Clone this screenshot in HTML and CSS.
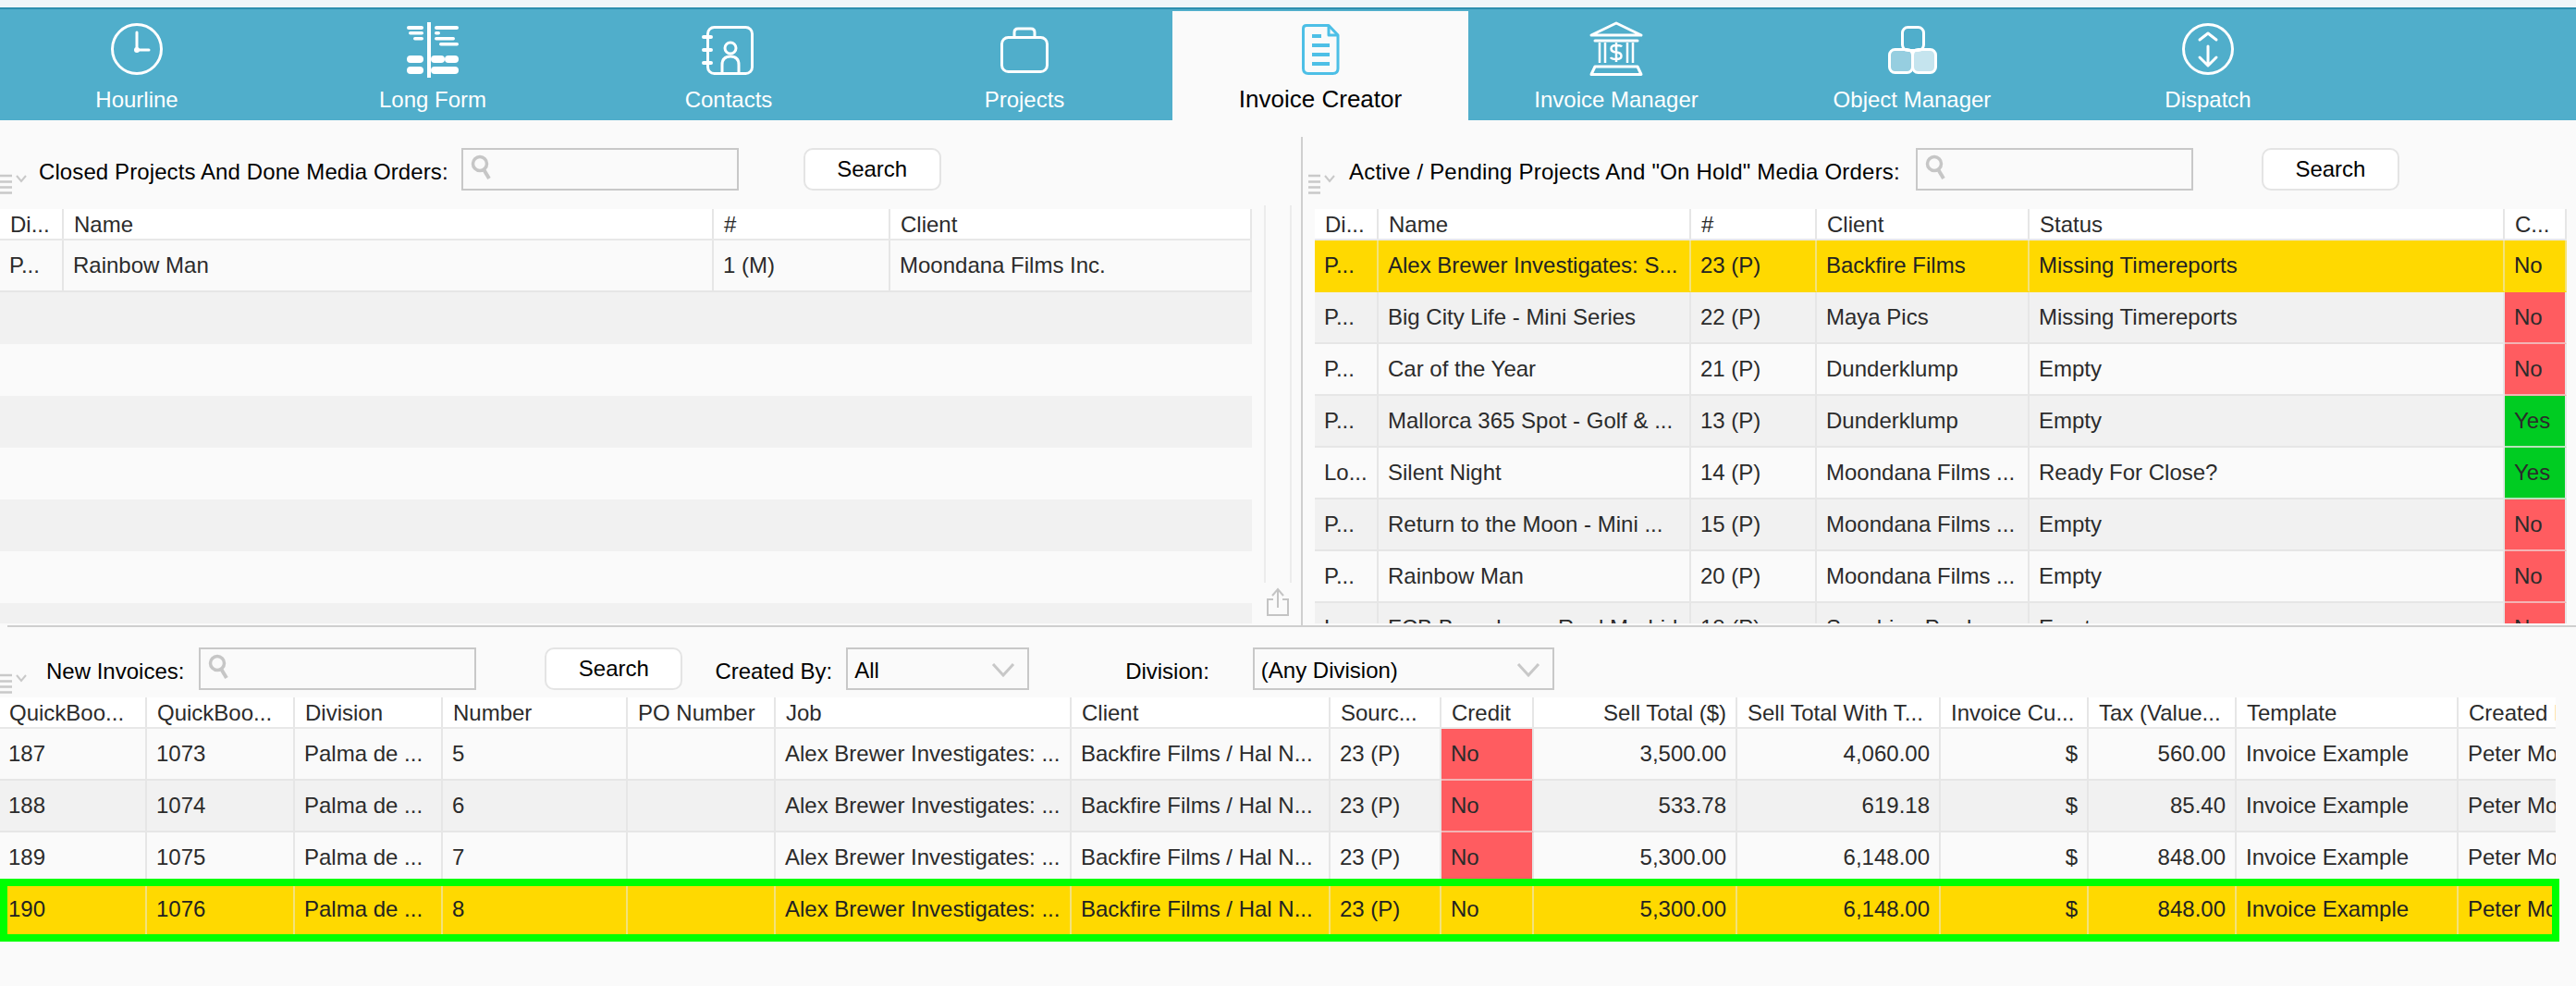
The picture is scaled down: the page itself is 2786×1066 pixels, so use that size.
FILE: index.html
```html
<!DOCTYPE html>
<html lang="en">
<head>
<meta charset="utf-8">
<title>Invoice Creator</title>
<link rel="stylesheet" href="styles.css">
</head>
<body>
<div class="app">
  <div class="top-strip"></div>
  <nav class="tabs">
    <a class="tab">
      <svg class="tab-icon" viewBox="0 0 64 64"><circle cx="32" cy="31" r="26.5" class="s3"/><path d="M32 13V32H45" class="s3"/><circle cx="32" cy="32" r="3" class="fw"/></svg>
      <span>Hourline</span>
    </a>
    <a class="tab">
      <svg class="tab-icon" viewBox="0 0 64 64"><g class="fw"><rect x="26" y="2" width="4" height="60"/><rect x="4" y="6" width="18" height="4" rx="2"/><rect x="34" y="6" width="26" height="4" rx="2"/><rect x="6" y="12" width="16" height="3.500" rx="1.700"/><rect x="34" y="12" width="6" height="3.500" rx="1.700"/><rect x="11" y="18" width="11" height="3.500" rx="1.700"/><rect x="34" y="18" width="22" height="3.500" rx="1.700"/><rect x="39" y="24" width="21" height="3.500" rx="1.700"/><rect x="4" y="38" width="18" height="8" rx="4"/><rect x="30" y="38" width="15" height="8" rx="4"/><rect x="45" y="38" width="15" height="8" rx="4"/><rect x="4" y="50" width="18" height="8" rx="4"/><rect x="30" y="50" width="30" height="8" rx="4"/></g></svg>
      <span>Long Form</span>
    </a>
    <a class="tab">
      <svg class="tab-icon" viewBox="0 0 64 64"><rect x="9.500" y="7.500" width="48" height="50" rx="7" class="s3"/><path d="M5 18H13M5 32H13M5 46H13" class="s4"/><circle cx="34" cy="30" r="6" class="s3"/><path d="M25 57V48Q25 39 34 39Q43 39 43 48V57" class="s3"/></svg>
      <span>Contacts</span>
    </a>
    <a class="tab">
      <svg class="tab-icon" viewBox="0 0 64 64"><rect x="7.500" y="18.500" width="49" height="37" rx="7" class="s3"/><path d="M21 18V13Q21 9 25 9H39Q43 9 43 13V18" class="s3"/></svg>
      <span>Projects</span>
    </a>
    <a class="tab active">
      <svg class="tab-icon" viewBox="0 0 64 64"><path d="M17 5.500H41L51 16V52Q51 57.500 45.500 57.500H19Q13.500 57.500 13.500 52V9Q13.500 5.500 17 5.500Z" class="sb"/><path d="M41 6V16H51" class="sb"/><path d="M23 17H33M23 27H42M23 37H42M23 47H42" class="sb4"/></svg>
      <span>Invoice Creator</span>
    </a>
    <a class="tab">
      <svg class="tab-icon" viewBox="0 0 64 64"><path d="M5 16L32 3L59 16Z" class="s3"/><path d="M9 22H55" class="s3"/><path d="M14 24V46M20 24V46M44 24V46M50 24V46" class="s2"/><path d="M38 28.500Q37 27 32 27Q26.500 27 26.500 30.500Q26.500 34 32 34.500Q37.500 35 37.500 38.500Q37.500 42 32 42Q27 42 26 40M32 24V45" class="s2"/><path d="M9 50H55L59 58.500H5Z" class="s3"/></svg>
      <span>Invoice Manager</span>
    </a>
    <a class="tab">
      <svg class="tab-icon" viewBox="0 0 64 64"><rect x="21.500" y="7.500" width="23" height="25" rx="6" class="s3"/><rect x="7.500" y="31.500" width="25" height="25" rx="6" class="s3 f40"/><rect x="32.500" y="31.500" width="25" height="25" rx="6" class="s3 f70"/></svg>
      <span>Object Manager</span>
    </a>
    <a class="tab">
      <svg class="tab-icon" viewBox="0 0 64 64"><circle cx="32" cy="31" r="26.500" class="s3"/><path d="M23 21L32 14L41 21M32 28V48M23 40L32 49L41 40" class="s3"/></svg>
      <span>Dispatch</span>
    </a>
  </nav>

  <section class="upper">
    <div class="pane pane-left">
      <div class="pane-main">
        <div class="toolbar">
          <svg class="menu-icon" viewBox="0 0 30 22"><path d="M0 2H13M0 8.500H13M0 14.500H13M0 20.500H13" class="menu-line"/><path d="M18 2L23 8L28 2" class="menu-chev"/></svg>
          <label class="field-label label-closed">Closed Projects And Done Media Orders:</label>
          <div class="search-box"><svg class="search-icon" viewBox="0 0 22 28"><circle cx="10" cy="10" r="7.500" class="mag"/><path d="M14 16L20 26" class="mag-h"/></svg></div>
          <button class="btn btn-closed">Search</button>
        </div>
        <div class="table">
          <div class="row head cols-closed"><div class="cell">Di...</div><div class="cell">Name</div><div class="cell">#</div><div class="cell">Client</div></div>
          <div class="row cols-closed"><div class="cell">P...</div><div class="cell">Rainbow Man</div><div class="cell">1 (M)</div><div class="cell">Moondana Films Inc.</div></div>
          <div class="row blank alt"></div>
          <div class="row blank"></div>
          <div class="row blank alt"></div>
          <div class="row blank"></div>
          <div class="row blank alt"></div>
          <div class="row blank"></div>
          <div class="row blank alt"></div>
        </div>
      </div>
      <div class="rail-col">
        <div class="rail"></div>
        <svg class="share-icon" viewBox="0 0 26 32"><path d="M8 13H2V30H24V13H18" class="share"/><path d="M13 22V3M7 9L13 2L19 9" class="share"/></svg>
      </div>
    </div>
    <div class="divider"></div>
    <div class="pane pane-right">
      <div class="toolbar toolbar-right">
        <svg class="menu-icon" viewBox="0 0 30 22"><path d="M0 2H13M0 8.500H13M0 14.500H13M0 20.500H13" class="menu-line"/><path d="M18 2L23 8L28 2" class="menu-chev"/></svg>
        <label class="field-label label-active">Active / Pending Projects And "On Hold" Media Orders:</label>
        <div class="search-box"><svg class="search-icon" viewBox="0 0 22 28"><circle cx="10" cy="10" r="7.500" class="mag"/><path d="M14 16L20 26" class="mag-h"/></svg></div>
        <button class="btn btn-active">Search</button>
      </div>
      <div class="table table-right">
        <div class="row head cols-active"><div class="cell">Di...</div><div class="cell">Name</div><div class="cell">#</div><div class="cell">Client</div><div class="cell">Status</div><div class="cell">C...</div></div>
        <div class="row cols-active hot"><div class="cell">P...</div><div class="cell">Alex Brewer Investigates: S...</div><div class="cell">23 (P)</div><div class="cell">Backfire Films</div><div class="cell">Missing Timereports</div><div class="cell">No</div></div>
        <div class="row cols-active alt"><div class="cell">P...</div><div class="cell">Big City Life - Mini Series</div><div class="cell">22 (P)</div><div class="cell">Maya Pics</div><div class="cell">Missing Timereports</div><div class="cell red">No</div></div>
        <div class="row cols-active"><div class="cell">P...</div><div class="cell">Car of the Year</div><div class="cell">21 (P)</div><div class="cell">Dunderklump</div><div class="cell">Empty</div><div class="cell red">No</div></div>
        <div class="row cols-active alt"><div class="cell">P...</div><div class="cell">Mallorca 365 Spot - Golf &amp; ...</div><div class="cell">13 (P)</div><div class="cell">Dunderklump</div><div class="cell">Empty</div><div class="cell ok">Yes</div></div>
        <div class="row cols-active"><div class="cell">Lo...</div><div class="cell">Silent Night</div><div class="cell">14 (P)</div><div class="cell">Moondana Films ...</div><div class="cell">Ready For Close?</div><div class="cell ok">Yes</div></div>
        <div class="row cols-active alt"><div class="cell">P...</div><div class="cell">Return to the Moon - Mini ...</div><div class="cell">15 (P)</div><div class="cell">Moondana Films ...</div><div class="cell">Empty</div><div class="cell red">No</div></div>
        <div class="row cols-active"><div class="cell">P...</div><div class="cell">Rainbow Man</div><div class="cell">20 (P)</div><div class="cell">Moondana Films ...</div><div class="cell">Empty</div><div class="cell red">No</div></div>
        <div class="row cols-active alt"><div class="cell">L...</div><div class="cell">FCB Barcelona - Real Madrid</div><div class="cell">18 (P)</div><div class="cell">Sunshine Prod...</div><div class="cell">Empty</div><div class="cell red">No</div></div>
      </div>
    </div>
  </section>
  <div class="rule"></div>

  <section class="lower">
    <div class="toolbar toolbar-lower">
      <svg class="menu-icon" viewBox="0 0 30 22"><path d="M0 2H13M0 8.500H13M0 14.500H13M0 20.500H13" class="menu-line"/><path d="M18 2L23 8L28 2" class="menu-chev"/></svg>
      <label class="field-label label-new">New Invoices:</label>
      <div class="search-box"><svg class="search-icon" viewBox="0 0 22 28"><circle cx="10" cy="10" r="7.500" class="mag"/><path d="M14 16L20 26" class="mag-h"/></svg></div>
      <button class="btn btn-lower">Search</button>
      <label class="field-label label-by">Created By:</label>
      <div class="select select-by"><span>All</span><svg class="select-chev" viewBox="0 0 26 16"><path d="M2 2L13 14L24 2"/></svg></div>
      <label class="field-label label-div">Division:</label>
      <div class="select select-div"><span>(Any Division)</span><svg class="select-chev" viewBox="0 0 26 16"><path d="M2 2L13 14L24 2"/></svg></div>
    </div>
    <div class="table table-lower">
      <div class="row head cols-inv"><div class="cell">QuickBoo...</div><div class="cell">QuickBoo...</div><div class="cell">Division</div><div class="cell">Number</div><div class="cell">PO Number</div><div class="cell">Job</div><div class="cell">Client</div><div class="cell">Sourc...</div><div class="cell">Credit</div><div class="cell num">Sell Total ($)</div><div class="cell">Sell Total With T...</div><div class="cell">Invoice Cu...</div><div class="cell">Tax (Value...</div><div class="cell">Template</div><div class="cell">Created By</div></div>
      <div class="row cols-inv"><div class="cell">187</div><div class="cell">1073</div><div class="cell">Palma de ...</div><div class="cell">5</div><div class="cell"></div><div class="cell">Alex Brewer Investigates: ...</div><div class="cell">Backfire Films / Hal N...</div><div class="cell">23 (P)</div><div class="cell red">No</div><div class="cell num">3,500.00</div><div class="cell num">4,060.00</div><div class="cell num">$</div><div class="cell num">560.00</div><div class="cell">Invoice Example</div><div class="cell">Peter Moore</div></div>
      <div class="row cols-inv alt"><div class="cell">188</div><div class="cell">1074</div><div class="cell">Palma de ...</div><div class="cell">6</div><div class="cell"></div><div class="cell">Alex Brewer Investigates: ...</div><div class="cell">Backfire Films / Hal N...</div><div class="cell">23 (P)</div><div class="cell red">No</div><div class="cell num">533.78</div><div class="cell num">619.18</div><div class="cell num">$</div><div class="cell num">85.40</div><div class="cell">Invoice Example</div><div class="cell">Peter Moore</div></div>
      <div class="row cols-inv"><div class="cell">189</div><div class="cell">1075</div><div class="cell">Palma de ...</div><div class="cell">7</div><div class="cell"></div><div class="cell">Alex Brewer Investigates: ...</div><div class="cell">Backfire Films / Hal N...</div><div class="cell">23 (P)</div><div class="cell red">No</div><div class="cell num">5,300.00</div><div class="cell num">6,148.00</div><div class="cell num">$</div><div class="cell num">848.00</div><div class="cell">Invoice Example</div><div class="cell">Peter Moore</div></div>
      <div class="row cols-inv hot selected"><div class="cell">190</div><div class="cell">1076</div><div class="cell">Palma de ...</div><div class="cell">8</div><div class="cell"></div><div class="cell">Alex Brewer Investigates: ...</div><div class="cell">Backfire Films / Hal N...</div><div class="cell">23 (P)</div><div class="cell">No</div><div class="cell num">5,300.00</div><div class="cell num">6,148.00</div><div class="cell num">$</div><div class="cell num">848.00</div><div class="cell">Invoice Example</div><div class="cell">Peter Moore</div><div class="selection-frame"></div></div>
    </div>
  </section>
</div>
</body>
</html>
```
FILE: styles.css
```css
* { box-sizing: border-box; }
html, body { margin: 0; padding: 0; }
body {
  width: 2786px;
  height: 1066px;
  overflow: hidden;
  background: #fafafa;
  font-family: "Liberation Sans", Arial, sans-serif;
  font-size: 24px;
  color: #000;
}
.app { display: flex; flex-direction: column; height: 1066px; overflow: hidden; }
.top-strip { height: 8px; background: #eef6f9; flex: none; }

/* tab bar */
.tabs {
  flex: none;
  height: 122px;
  display: flex;
  margin-left: -12px;
  background: #50aecb;
  border-top: 2px solid #2b8fae;
  width: 2798px;
}
.tab {
  flex: none;
  width: 320px;
  display: flex;
  flex-direction: column;
  align-items: center;
  color: #fff;
  padding-top: 12px;
}
.tab span { line-height: 28px; margin-top: 8px; white-space: nowrap; }
.tab-icon { width: 64px; height: 64px; display: block; fill: none; }
.tab.active { background: #fafafa; color: #000; margin-top: 2px; padding-top: 10px; }
.tab.active span { margin-top: 7px; font-size: 26px; }
.s2 { fill: none; stroke: #fff; stroke-width: 2.500; }
.s3 { fill: none; stroke: #fff; stroke-width: 3; stroke-linecap: round; stroke-linejoin: round; }
.s4 { fill: none; stroke: #fff; stroke-width: 4; stroke-linecap: round; }
.fw { fill: #fff; }
.s3.f40 { fill: rgba(255, 255, 255, 0.4); }
.s3.f70 { fill: rgba(255, 255, 255, 0.67); }
.sb { fill: none; stroke: #4dbfe6; stroke-width: 3; stroke-linejoin: round; }
.sb4 { fill: none; stroke: #4dbfe6; stroke-width: 4; }

/* upper panes */
.upper { flex: none; height: 546px; display: flex; }
.pane { height: 544px; overflow: hidden; flex: none; }
.pane-left { width: 1407px; display: flex; }
.pane-main { width: 1354px; flex: none; }
.pane-right { width: 1377px; padding-left: 6px; }
.divider { flex: none; width: 2px; margin-top: 18px; background: #cfcfcf; }

.rail-col { margin-left: 12px; width: 32px; flex: none; display: flex; flex-direction: column; align-items: center; }
.rail { width: 30px; height: 408px; margin-top: 92px; border-left: 2px solid #ececec; border-right: 2px solid #ececec; flex: none; }
.share-icon { width: 26px; height: 32px; margin-top: 5px; flex: none; fill: none; }
.share { fill: none; stroke: #c4c4c4; stroke-width: 2; }

/* toolbars */
.toolbar { display: flex; align-items: flex-start; height: 96px; padding-top: 30px; }
.menu-icon { width: 30px; height: 22px; flex: none; margin-top: 28px; fill: none; }
.menu-line { fill: none; stroke: #c9c9c9; stroke-width: 2.500; }
.menu-chev { fill: none; stroke: #c9c9c9; stroke-width: 2; }
.field-label { flex: none; line-height: 46px; padding-top: 3px; white-space: nowrap; }
.label-closed { margin-left: 12px; letter-spacing: 0.1px; }
.label-active { margin-left: 14px; letter-spacing: 0.2px; }
.search-box {
  flex: none;
  width: 300px;
  height: 46px;
  border: 2px solid #c8c8c8;
  padding: 5px 0 0 8px;
  background: #fafafa;
}
.search-icon { width: 22px; height: 28px; display: block; }
.mag { fill: none; stroke: #c6c6c6; stroke-width: 3.500; }
.mag-h { fill: none; stroke: #c6c6c6; stroke-width: 4; }
.label-closed + .search-box { margin-left: 14px; }
.label-active + .search-box { margin-left: 17px; }
.btn {
  flex: none;
  width: 149px;
  height: 46px;
  background: #fff;
  border: 2px solid #e4e4e4;
  border-radius: 10px;
  font: inherit;
  color: #000;
  padding: 0;
}
.btn-closed { margin-left: 70px; }
.btn-active { margin-left: 74px; }

.toolbar-right { padding-top: 30px; }
.toolbar-lower { height: 76px; padding-top: 22px; }
.label-new { margin-left: 20px; }
.label-new + .search-box { margin-left: 16px; }
.btn-lower { margin-left: 74px; }
.label-by { margin-left: 35px; }
.select {
  flex: none;
  height: 46px;
  border: 2px solid #c8c8c8;
  display: flex;
  align-items: center;
  justify-content: space-between;
  padding: 3px 13px 0 7px;
  background: #fafafa;
}
.select-by { width: 198px; margin-left: 15px; }
.select-div { width: 326px; margin-left: 47px; }
.label-div { margin-left: 104px; }
.select-chev { width: 26px; height: 16px; display: block; margin-top: -1px; fill: none; }
.select-chev path { fill: none; stroke: #c8c8c8; stroke-width: 3; }

.rule { flex: none; height: 2px; margin-left: 8px; background: #cfcfcf; }

/* tables */
.table { width: 1354px; }
.table-right { margin-left: 7px; }
.table-lower { width: 2765px; margin-left: -1px; }
.row { display: grid; height: 56px; }
.cols-closed { grid-template-columns: 69px 703px 191px 391px; }
.cols-active { grid-template-columns: 69px 338px 136px 230px 514px 67px; }
.cols-inv { grid-template-columns: 160px 160px 160px 200px 160px 320px 280px 120px 100px 220px 220px 160px 160px 240px 105px; }
.cell {
  min-width: 0;
  overflow: hidden;
  white-space: nowrap;
  padding: 0 8px 0 10px;
  line-height: 54px;
  color: #2b2b2b;
  border-right: 2px solid #e6e6e6;
  border-bottom: 2px solid #e6e6e6;
}
.cell:last-child { border-right-width: 0; }
.cols-closed .cell:last-child { border-right-width: 2px; }
.cols-active .cell:last-child { border-right-width: 2px; }
.row.head { height: 34px; background: #fff; border-bottom: 2px solid #e8e8e8; }
.row.head .cell { line-height: 34px; border-bottom: 0; padding-left: 11px; }
.alt { background: #f1f1f1; }
.hot { background: #ffd900; }
.hot .cell { color: #222; border-color: #f3e27a; border-bottom-color: #ffd900; }
.cell.red { background: #ff5c60; border-bottom-color: #f3b4b4; }
.cell.ok { background: #00cc22; border-bottom-color: #b7e3ba; }
.cell.num { text-align: right; padding: 0 10px 0 4px; }
.row.head .cell.num { padding-left: 4px; }

.selected { position: relative; }
.selection-frame {
  position: absolute;
  top: -6px;
  bottom: -6px;
  left: 1px;
  right: -4px;
  border: 8px solid #00ff00;
  pointer-events: none;
}
```
